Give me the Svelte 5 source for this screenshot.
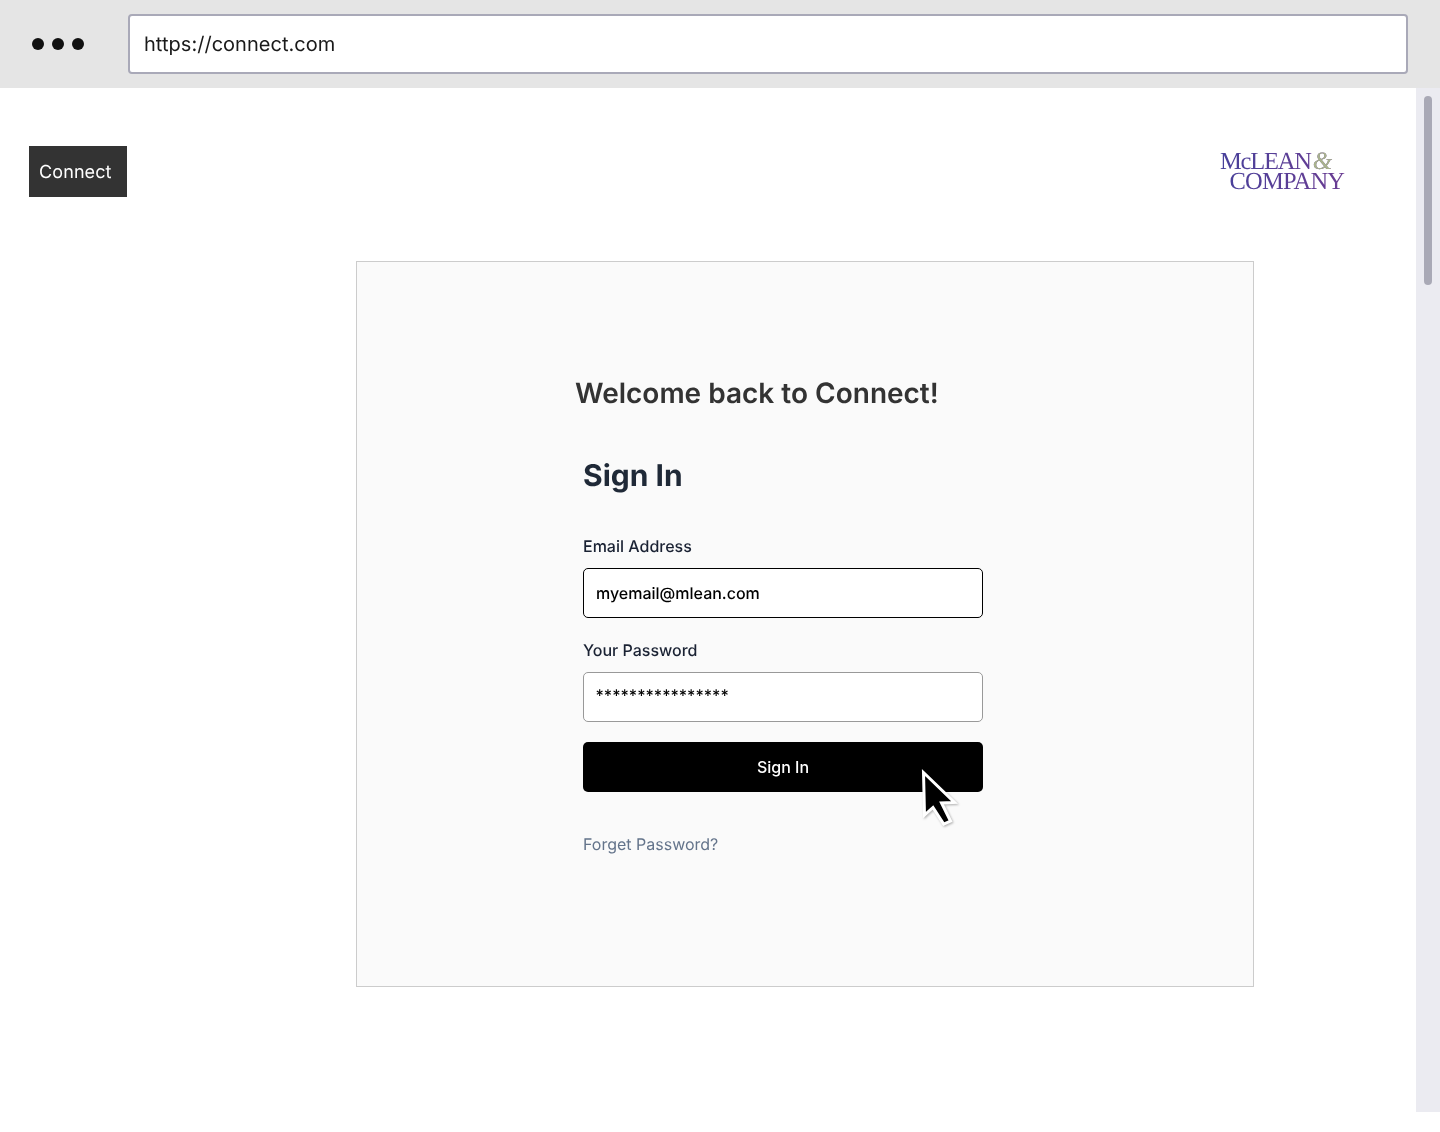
<script>
  let url = 'https://connect.com';
  let email = 'myemail@mlean.com';
  let password = '****************';
</script>

<div class="page">
  <div class="browser-bar">
    <div class="dots">
      <span></span>
      <span></span>
      <span></span>
    </div>
    <div class="url">{url}</div>
  </div>

  <div class="viewport">
    <div class="content">
      <header>
        <div class="brand">Connect</div>
        <div class="logo">
          <div class="logo-top">McLEAN<em>&amp;</em></div>
          <div class="logo-bottom">COMPANY</div>
        </div>
      </header>

      <section class="card">
        <div class="panel">
          <h1>Welcome back to Connect!</h1>
          <form on:submit|preventDefault>
            <h2>Sign In</h2>
            <div class="label first">Email Address</div>
            <div class="input active">{email}</div>
            <div class="label">Your Password</div>
            <div class="input pass">{password}</div>
            <div class="btn-wrap">
              <button type="submit">Sign In</button>
              <svg class="cursor" width="42" height="66" viewBox="0 0 42 66">
                <path
                  d="M3.5 3.5 L4.5 46 L13 38.5 L23.7 55 L30.5 52 L21.5 34 L34.5 33.5 Z"
                  fill="#000"
                  stroke="#fff"
                  stroke-width="3"
                  stroke-linejoin="miter"
                  class="arrow"
                />
              </svg>
            </div>
            <a href="#forgot">Forget Password?</a>
          </form>
        </div>
      </section>
    </div>

    <div class="scrollbar">
      <div class="thumb"></div>
    </div>
  </div>
</div>

<style>
  :global(body) {
    margin: 0;
    background: #fff;
  }

  .page {
    width: 1440px;
    height: 1132px;
    font-family: Inter, "Liberation Sans", sans-serif;
    text-rendering: geometricPrecision;
    overflow: hidden;
    will-change: transform;
  }

  .browser-bar {
    height: 88px;
    box-sizing: border-box;
    padding: 14px 32px;
    background: #e5e5e5;
    display: flex;
    align-items: stretch;
  }

  .dots {
    width: 96px;
    display: flex;
    align-items: center;
    gap: 8px;
  }

  .dots span {
    width: 12px;
    height: 12px;
    border-radius: 50%;
    background: #111;
  }

  .url {
    flex: 1;
    box-sizing: border-box;
    display: flex;
    align-items: center;
    padding: 0 14px;
    background: #fff;
    border: 2px solid #a9a9b8;
    border-radius: 4px;
    font-size: 20px;
    letter-spacing: 0.03px;
    color: #1a1a1a;
  }

  .viewport {
    height: 1024px;
    display: flex;
  }

  .content {
    flex: 1;
  }

  header {
    display: flex;
    justify-content: space-between;
    align-items: flex-start;
    padding: 58px 70px 0 29px;
    height: 115px;
    box-sizing: content-box;
  }

  .brand {
    width: 98px;
    height: 51px;
    box-sizing: border-box;
    padding-left: 10px;
    line-height: 53px;
    background: #333;
    color: #fff;
    font-size: 18px;
    letter-spacing: 0.1px;
  }

  .logo {
    width: 126px;
    margin-top: 6px;
    font-family: "Liberation Serif", serif;
    font-size: 24.5px;
    line-height: 20px;
    letter-spacing: -1.2px;
  }

  .logo-top,
  .logo-bottom {
    color: transparent;
    background: linear-gradient(90deg, #47409a, #6b3c92);
    -webkit-background-clip: text;
    background-clip: text;
    white-space: nowrap;
    height: 20px;
  }

  .logo-top {
    height: 19.5px;
  }

  .logo-top em {
    color: #a9b48c;
    font-size: 25px;
    font-weight: 300;
    margin-left: 2px;
  }

  .logo-bottom {
    padding-left: 9.5px;
    letter-spacing: -0.8px;
  }

  .card {
    width: 898px;
    height: 726px;
    box-sizing: border-box;
    margin-left: 356px;
    padding: 113px 0 0 218px;
    background: #fafafa;
    border: 1px solid #ccc;
  }

  h1 {
    margin: 0;
    height: 36px;
    line-height: 36px;
    font-size: 28px;
    font-weight: 600;
    color: #333;
  }

  form {
    width: 400px;
    margin: 42px 0 0 8px;
  }

  h2 {
    margin: 0;
    height: 46px;
    line-height: 46px;
    font-size: 30px;
    font-weight: 700;
    color: #1f2937;
  }

  .label {
    height: 24px;
    line-height: 24px;
    margin: 20px 0 10px;
    font-size: 16px;
    font-weight: 500;
    color: #1a2233;
  }

  .label.first {
    margin-top: 35px;
  }

  .input {
    height: 50px;
    box-sizing: border-box;
    padding: 0 12px;
    line-height: 48px;
    background: #fff;
    border: 1px solid #999;
    border-radius: 5px;
    font-size: 16px;
    font-weight: 500;
    color: #000;
  }

  .input.active {
    border-color: #000;
  }

  .input.pass {
    padding-left: 11.5px;
    line-height: 44px;
  }

  .btn-wrap {
    position: relative;
    margin-top: 20px;
  }

  button {
    display: block;
    width: 100%;
    height: 50px;
    padding: 0;
    background: #000;
    border: 0;
    border-radius: 5px;
    color: #fff;
    font-family: inherit;
    font-size: 16px;
    font-weight: 500;
  }

  .cursor {
    position: absolute;
    left: 337px;
    top: 27px;
  }

  .arrow {
    filter: drop-shadow(1px 1px 1px rgba(0, 0, 0, 0.3));
  }

  a {
    display: block;
    margin-top: 40px;
    line-height: 24px;
    font-size: 16px;
    color: #64748b;
    text-decoration: none;
  }

  .scrollbar {
    width: 24px;
    box-sizing: border-box;
    padding: 8px;
    background: #ebebf1;
  }

  .thumb {
    height: 189px;
    border-radius: 4px;
    background: #a9a9b6;
  }
</style>
